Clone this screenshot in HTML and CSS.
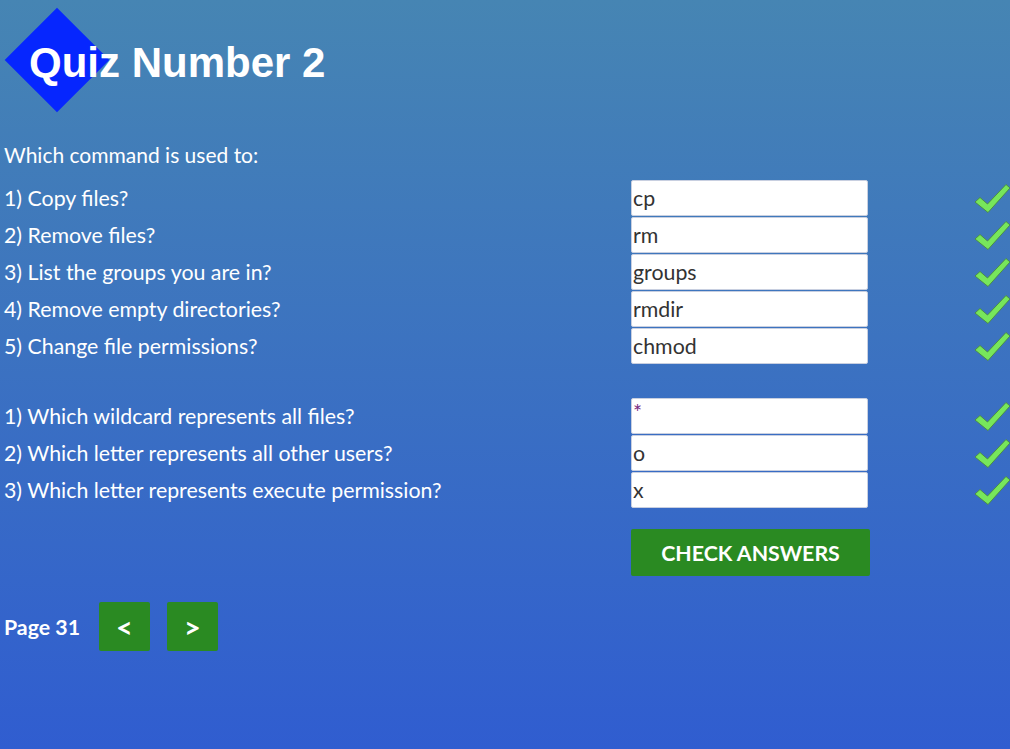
FILE: index.html
```html
<!DOCTYPE html>
<html>
<head>
<meta charset="utf-8">
<link rel="stylesheet" href="styles.css">
</head>
<body>
<div class="page">
  <header class="header">
    <div class="diamond"></div>
    <h1 class="title">Quiz Number 2</h1>
  </header>
  <p class="intro">Which command is used to:</p>
  <div class="group">
    <div class="row"><span class="label">1) Copy files?</span><input class="answer" value="cp"><svg class="check" viewBox="0 0 36 30"><path d="M1 18 L6 13.5 L13.5 20 L32 0.5 L36 4 L14 28.5 Z"/></svg></div>
    <div class="row"><span class="label">2) Remove files?</span><input class="answer" value="rm"><svg class="check" viewBox="0 0 36 30"><path d="M1 18 L6 13.5 L13.5 20 L32 0.5 L36 4 L14 28.5 Z"/></svg></div>
    <div class="row"><span class="label">3) List the groups you are in?</span><input class="answer" value="groups"><svg class="check" viewBox="0 0 36 30"><path d="M1 18 L6 13.5 L13.5 20 L32 0.5 L36 4 L14 28.5 Z"/></svg></div>
    <div class="row"><span class="label">4) Remove empty directories?</span><input class="answer" value="rmdir"><svg class="check" viewBox="0 0 36 30"><path d="M1 18 L6 13.5 L13.5 20 L32 0.5 L36 4 L14 28.5 Z"/></svg></div>
    <div class="row"><span class="label">5) Change file permissions?</span><input class="answer" value="chmod"><svg class="check" viewBox="0 0 36 30"><path d="M1 18 L6 13.5 L13.5 20 L32 0.5 L36 4 L14 28.5 Z"/></svg></div>
  </div>
  <div class="group second">
    <div class="row"><span class="label">1) Which wildcard represents all files?</span><input class="answer star" value="*"><svg class="check" viewBox="0 0 36 30"><path d="M1 18 L6 13.5 L13.5 20 L32 0.5 L36 4 L14 28.5 Z"/></svg></div>
    <div class="row"><span class="label">2) Which letter represents all other users?</span><input class="answer" value="o"><svg class="check" viewBox="0 0 36 30"><path d="M1 18 L6 13.5 L13.5 20 L32 0.5 L36 4 L14 28.5 Z"/></svg></div>
    <div class="row"><span class="label">3) Which letter represents execute permission?</span><input class="answer" value="x"><svg class="check" viewBox="0 0 36 30"><path d="M1 18 L6 13.5 L13.5 20 L32 0.5 L36 4 L14 28.5 Z"/></svg></div>
  </div>
  <div class="actions">
    <button class="check-btn">CHECK ANSWERS</button>
  </div>
  <nav class="pager">
    <span class="page-num">Page 31</span>
    <button class="nav-btn">&lt;</button>
    <button class="nav-btn">&gt;</button>
  </nav>
</div>
</body>
</html>
```
FILE: styles.css
```css
html, body {
  margin: 0;
  padding: 0;
  height: 100%;
}
body {
  background: linear-gradient(to bottom, #4685b3 0%, #305dd0 100%);
  font-family: Lato, "Open Sans", sans-serif;
  color: #fff;
  overflow: hidden;
}
.page {
  width: 1010px;
  height: 749px;
  padding-left: 4px;
  box-sizing: border-box;
}
.header {
  position: relative;
  height: 130px;
}
.diamond {
  position: absolute;
  left: 16px;
  top: 23px;
  width: 74px;
  height: 74px;
  background: #0626fe;
  transform: rotate(45deg);
}
.title {
  position: relative;
  margin: 0;
  padding: 39px 0 0 25px;
  font-family: "Liberation Sans", Arial, sans-serif;
  font-weight: bold;
  font-size: 42px;
  line-height: 48px;
  color: #fff;
}
.intro {
  margin: 0;
  font-size: 21px;
  line-height: 26px;
  height: 50px;
  padding-top: 12px;
  box-sizing: border-box;
}
.group {
  display: flex;
  flex-direction: column;
}
.second {
  margin-top: 33px;
}
.row {
  display: flex;
  align-items: center;
  height: 37px;
}
.label {
  width: 627px;
  font-size: 21.33px;
  line-height: 24px;
  padding-bottom: 1px;
}
.answer {
  width: 237px;
  height: 36px;
  box-sizing: border-box;
  margin: 0 0 1px 0;
  border: 1px solid #c8cfe0;
  border-radius: 2px;
  padding: 0 1px;
  font-family: Lato, sans-serif;
  font-size: 21.33px;
  color: #333;
  background: #fff;
  outline: none;
}
.star {
  color: #7a2a80;
  padding-bottom: 8px;
}
.check {
  width: 36px;
  height: 30px;
  margin-left: auto;
  margin-right: 0;
}
.check path {
  fill: #77e65b;
  stroke: #4a8a40;
  stroke-width: 0.9;
}
.actions {
  margin-top: 20px;
  padding-left: 627px;
}
.check-btn {
  width: 239px;
  height: 47px;
  border: none;
  border-radius: 2px;
  background: #2a8a22;
  color: #fff;
  font-family: Lato, sans-serif;
  font-weight: bold;
  font-size: 21.33px;
  padding: 0;
  display: block;
}
.pager {
  display: flex;
  align-items: center;
  margin-top: 26px;
}
.page-num {
  font-weight: bold;
  font-size: 21.33px;
  width: 95px;
}
.nav-btn {
  width: 51px;
  height: 49px;
  border: none;
  border-radius: 2px;
  background: #2a8a22;
  color: #fff;
  font-family: Lato, sans-serif;
  font-weight: bold;
  font-size: 29px;
  padding: 0;
  margin-right: 17px;
}
```
